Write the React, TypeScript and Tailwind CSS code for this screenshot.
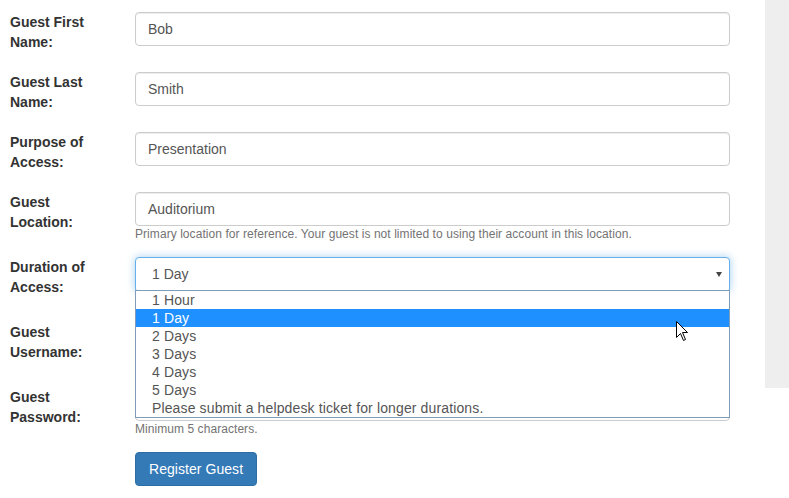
import React from "react";

const font = { fontFamily: '"Liberation Sans", Arial, sans-serif' };

function Label({ children }: { children: React.ReactNode }) {
  return (
    <label className="w-[95px] shrink-0 text-[14px] leading-[20px] font-bold text-[#333]">
      {children}
    </label>
  );
}

function Input({ value }: { value: string }) {
  return (
    <div className="h-[34px] w-full rounded-[4px] border border-[#ccc] bg-white px-[12px] text-[14px] leading-[32px] text-[#555] shadow-[inset_0_1px_1px_rgba(0,0,0,0.075)]">
      {value}
    </div>
  );
}

function Help({ children }: { children?: React.ReactNode }) {
  return (
    <p className="h-[11px] text-[12px] leading-[17px] tracking-[0.06px] text-[#737373] whitespace-nowrap">
      {children}
    </p>
  );
}

const options = [
  "1 Hour",
  "1 Day",
  "2 Days",
  "3 Days",
  "4 Days",
  "5 Days",
  "Please submit a helpdesk ticket for longer durations.",
];

export default function App() {
  return (
    <div style={font} className="relative flex w-[789px] h-[498px] bg-white overflow-hidden">
      <main className="flex-1 pl-[10px] pr-[35px] pt-[12px]">
        <div className="flex flex-col gap-[20px]">
          <div className="flex gap-[30px]">
            <Label>Guest First Name:</Label>
            <div className="flex-1"><Input value="Bob" /></div>
          </div>
          <div className="flex gap-[30px]">
            <Label>Guest Last Name:</Label>
            <div className="flex-1"><Input value="Smith" /></div>
          </div>
          <div className="flex gap-[30px]">
            <Label>Purpose of Access:</Label>
            <div className="flex-1"><Input value="Presentation" /></div>
          </div>
          <div className="flex gap-[30px]">
            <Label>Guest Location:</Label>
            <div className="flex-1">
              <Input value="Auditorium" />
              <Help>Primary location for reference. Your guest is not limited to using their account in this location.</Help>
            </div>
          </div>
          <div className="flex gap-[30px]">
            <Label>Duration of Access:</Label>
            <div className="flex-1 relative">
              <div className="h-[34px] w-full rounded-t-[4px] rounded-b-[2px] border border-[#66afe9] bg-white pl-[16px] pr-[7px] text-[14px] leading-[32px] text-[#555] shadow-[0_0_8px_rgba(102,175,233,0.6)] flex items-center justify-between">
                <span>1 Day</span>
                <svg width="6" height="5" viewBox="0 0 6 5">
                  <path d="M0 0 L6 0 L3 5 Z" fill="#444" />
                </svg>
              </div>
              <Help />
              <div className="absolute left-0 right-0 top-[33px] z-10 border border-[#7f9db9] bg-white text-[14px] leading-[18px] tracking-[0.13px] text-[#555]">
                {options.map((o) => (
                  <div
                    key={o}
                    className={
                      o === "1 Day"
                        ? "h-[18px] pl-[16px] bg-[#1e90ff] text-white"
                        : "h-[18px] pl-[16px]"
                    }
                  >
                    {o}
                  </div>
                ))}
              </div>
            </div>
          </div>
          <div className="flex gap-[30px]">
            <Label>Guest Username:</Label>
            <div className="flex-1">
              <Input value="" />
              <Help />
            </div>
          </div>
          <div className="flex gap-[30px]">
            <Label>Guest Password:</Label>
            <div className="flex-1">
              <Input value="" />
              <Help>Minimum 5 characters.</Help>
            </div>
          </div>
          <div className="flex gap-[30px]">
            <div className="w-[95px] shrink-0" />
            <div className="flex-1">
              <button className="h-[34px] rounded-[4px] border border-[#2e6da4] bg-[#337ab7] px-[13px] text-[14px] leading-[20px] tracking-[0.05px] text-white">
                Register Guest
              </button>
            </div>
          </div>
        </div>
      </main>
      <aside className="w-[24px] h-[388px] bg-[#eeeeee] shrink-0" />
      <svg className="absolute left-[676px] top-[321px] z-20" width="13" height="21" viewBox="0 0 13 21">
        <path d="M0.5 0.5 L0.5 16.5 L4.5 12.5 L7.5 19.5 L9.5 18.5 L6.5 11.5 L11.5 11.5 Z" fill="white" stroke="black" strokeWidth="1" />
      </svg>
    </div>
  );
}
